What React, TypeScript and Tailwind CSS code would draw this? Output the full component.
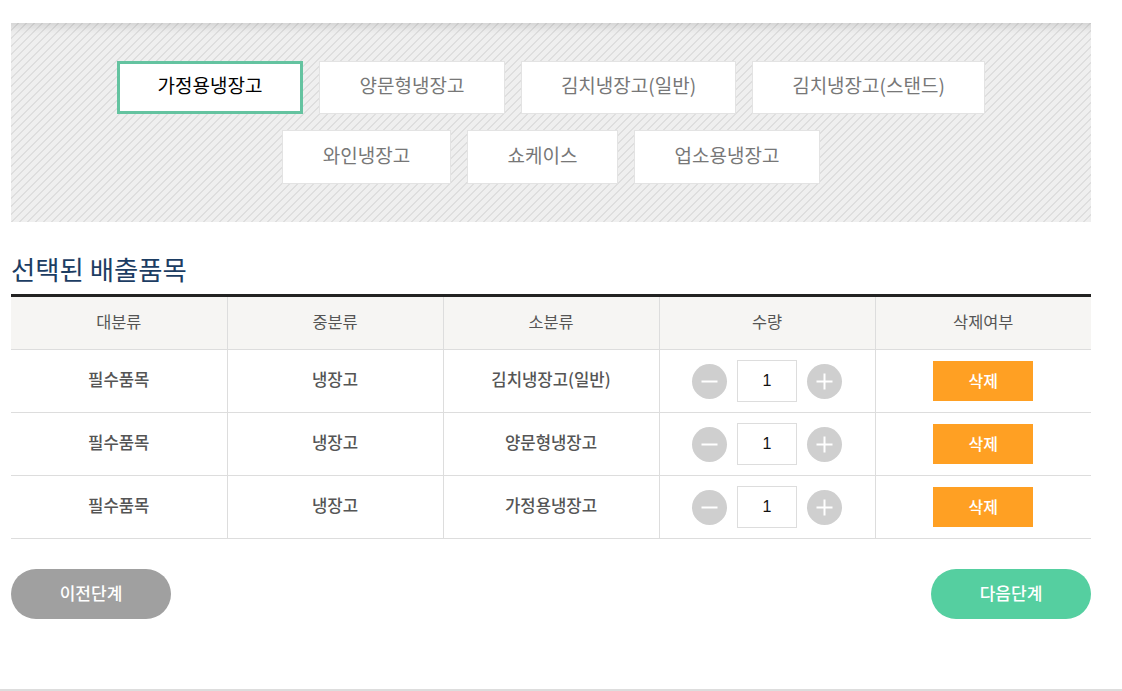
import React from 'react';

const row1 = [
  { label: '가정용냉장고', w: 'w-[186px]', active: true },
  { label: '양문형냉장고', w: 'w-[186px]' },
  { label: '김치냉장고(일반)', w: 'w-[215px]' },
  { label: '김치냉장고(스탠드)', w: 'w-[233px]' },
];
const row2 = [
  { label: '와인냉장고', w: 'w-[169px]' },
  { label: '쇼케이스', w: 'w-[151px]' },
  { label: '업소용냉장고', w: 'w-[186px]' },
];
const items = ['김치냉장고(일반)', '양문형냉장고', '가정용냉장고'];
const heads = ['대분류', '중분류', '소분류', '수량', '삭제여부'];

const Category = ({ label, w, active }: { label: string; w: string; active?: boolean }) => (
  <button
    className={`${w} bg-white pb-[4px] text-[19px] ${
      active ? 'border-[3px] border-[#64c3a0] text-black' : 'border border-[#e3e3e3] text-[#777]'
    }`}
  >
    {label}
  </button>
);

const RoundBtn = ({ plus }: { plus?: boolean }) => (
  <button className="flex h-[35px] w-[35px] items-center justify-center rounded-full bg-[#cfcfcf]">
    <svg width="19" height="19" viewBox="0 0 19 19" stroke="#fff" strokeWidth="2" fill="none">
      <path d="M1.5 9.5h16" />
      {plus && <path d="M9.5 1.5v16" />}
    </svg>
  </button>
);

export default function App() {
  return (
    <div className="relative h-[691px] w-[1122px] overflow-hidden bg-white font-['Noto_Sans_CJK_KR','Noto_Sans',sans-serif]">
      <div className="ml-[11px] w-[1080px] pt-[23px]">
        <div className="flex h-[199px] flex-col items-center gap-4 bg-[repeating-linear-gradient(135deg,#efefef_0,#efefef_4.6px,#dedede_4.6px,#dedede_5.657px)] pt-[38px] shadow-[inset_0_10px_8px_-6px_rgba(0,0,0,0.12)]">
          <div className="flex h-[53px] gap-4">
            {row1.map((c) => (
              <Category key={c.label} {...c} />
            ))}
          </div>
          <div className="flex h-[54px] gap-4">
            {row2.map((c) => (
              <Category key={c.label} {...c} />
            ))}
          </div>
        </div>

        <h2 className="mt-[27px] h-[45px] text-[26.4px] leading-[40px] text-[#1c3d63]">선택된 배출품목</h2>

        <table className="w-full table-fixed border-collapse border-t-[3px] border-[#222] text-[16.7px] text-[#555]">
          <thead>
            <tr className="h-[54px] bg-[#f6f5f3]">
              {heads.map((h, i) => (
                <th
                  key={h}
                  className={`border-b border-[#dddddd] pb-[3px] text-[16.4px] font-normal ${i < 4 ? 'border-r' : ''}`}
                >
                  {h}
                </th>
              ))}
            </tr>
          </thead>
          <tbody>
            {items.map((name) => (
              <tr key={name} className="h-[63px] border-b border-[#dddddd] font-medium">
                <td className="border-r border-[#dddddd] pb-[2px] text-center">필수품목</td>
                <td className="border-r border-[#dddddd] pb-[2px] text-center">냉장고</td>
                <td className="border-r border-[#dddddd] pb-[2px] text-center">{name}</td>
                <td className="border-r border-[#dddddd]">
                  <div className="flex items-center justify-center gap-[10px]">
                    <RoundBtn />
                    <div className="flex h-[42px] w-[60px] items-center justify-center border border-[#dddddd] pb-[1px] font-['Liberation_Sans',sans-serif] text-[16px] font-normal text-[#111]">
                      1
                    </div>
                    <RoundBtn plus />
                  </div>
                </td>
                <td>
                  <div className="flex justify-center">
                    <button className="h-10 w-[100px] bg-[#ffa023] pb-[2px] text-[16px] font-medium text-white">삭제</button>
                  </div>
                </td>
              </tr>
            ))}
          </tbody>
        </table>

        <div className="mt-[30px] flex justify-between">
          <button className="h-[50px] w-40 rounded-[25px] bg-[#a0a0a0] pb-[2px] text-[17px] font-medium text-white">이전단계</button>
          <button className="h-[50px] w-40 rounded-[25px] bg-[#55cfa0] pb-[2px] text-[17px] font-medium text-white">다음단계</button>
        </div>
      </div>
      <div className="absolute inset-x-0 bottom-0 h-[2px] bg-[#dddddd]" />
    </div>
  );
}
